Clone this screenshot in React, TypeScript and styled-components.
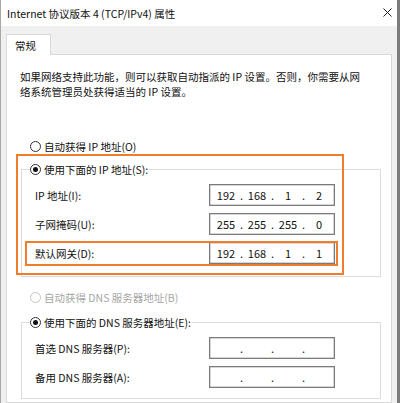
import React from "react";
import styled, { createGlobalStyle } from "styled-components";

const GlobalStyle = createGlobalStyle`
  html, body {
    margin: 0;
    padding: 0;
    background: #ffffff;
  }
  body {
    font-family: "Noto Sans CJK SC", "Noto Sans", sans-serif;
    font-size: 10.5px;
    color: #111;
  }
`;

const ORANGE = "#ef7d2c";

const Window = styled.div`
  width: 400px;
  height: 403px;
  box-sizing: border-box;
  border-left: 1px solid #a8a8a8;
  border-right: 3px solid #7c7c7c;
  background: #f0f0f0;
  overflow: hidden;
  display: flex;
  flex-direction: column;
`;

const TitleBar = styled.div`
  height: 26px;
  flex: none;
  background: #ffffff;
  display: flex;
  align-items: center;
  justify-content: space-between;
  padding: 0 5px 0 6px;
`;

const Title = styled.span`
  font-size: 10.5px;
  color: #111;
`;

const CloseIcon = styled.svg`
  width: 9px;
  height: 9px;
  margin-top: -1px;
`;

const Body = styled.div`
  flex: 1;
  padding: 8px 5px 0 5px;
  display: flex;
  flex-direction: column;
`;

const Tabs = styled.div`
  display: flex;
  flex: none;
`;

const Tab = styled.div`
  width: 45px;
  height: 21px;
  box-sizing: border-box;
  background: #ffffff;
  border: 1px solid #d9d9d9;
  border-bottom: none;
  padding: 3px 0 0 8px;
  margin-bottom: -1px;
  position: relative;
  z-index: 1;
`;

const Panel = styled.div`
  flex: 1;
  background: #ffffff;
  border: 1px solid #d9d9d9;
  padding: 14px 10px 0 13px;
  display: flex;
  flex-direction: column;

  & > * {
    flex: none;
  }
`;

const Intro = styled.p`
  margin: 0;
  line-height: 15px;
  white-space: nowrap;
`;

const RadioRow = styled.label<{ disabled?: boolean; inset?: number }>`
  display: flex;
  align-items: center;
  gap: 3px;
  height: 14px;
  padding-left: ${({ inset = 10 }) => inset}px;
  color: ${({ disabled }) => (disabled ? "#a6a6a6" : "#111")};
  white-space: nowrap;
`;

const Circle = styled.span<{ checked?: boolean; disabled?: boolean }>`
  width: 11px;
  height: 11px;
  box-sizing: border-box;
  border-radius: 50%;
  border: 1px solid ${({ disabled }) => (disabled ? "#c4c4c4" : "#333")};
  background: #fff;
  display: flex;
  align-items: center;
  justify-content: center;

  &::after {
    content: "";
    width: 5px;
    height: 5px;
    border-radius: 50%;
    background: #111;
    display: ${({ checked }) => (checked ? "block" : "none")};
  }
`;

const Section = styled.div<{ top: number }>`
  position: relative;
  margin-top: ${({ top }) => top}px;
`;

const Group = styled.fieldset<{ bottom: number }>`
  margin: 0 0 0 1px;
  width: 360px;
  box-sizing: border-box;
  border: 1px solid #dcdcdc;
  padding: 8px 0 ${({ bottom }) => bottom}px 13px;
  display: flex;
  flex-direction: column;
  gap: 7px;

  & > * {
    flex: none;
  }
`;

const Legend = styled.legend`
  padding: 0 1px 0 0;
  margin-left: -5px;
  height: 14px;
  display: flex;
  align-items: center;
`;

const FieldRow = styled.div`
  position: relative;
  width: 300px;
  height: 22px;
  display: flex;
  align-items: center;
  justify-content: space-between;
`;

const FieldLabel = styled.span`
  white-space: nowrap;
`;

const IpBox = styled.div`
  width: 126px;
  height: 22px;
  box-sizing: border-box;
  border: 1px solid #7a7a7a;
  box-shadow: inset 0 0 0 0.5px #b0b0b0;
  padding-left: 4px;
  display: flex;
  align-items: center;
  font-size: 11px;
`;

const Octet = styled.span`
  width: 24px;
  text-align: center;
`;

const Dot = styled.span`
  width: 7px;
  text-align: center;
`;

const Highlight = styled.div<{
  l: number;
  t: number;
  w: number;
  h: number;
}>`
  position: absolute;
  left: ${({ l }) => l}px;
  top: ${({ t }) => t}px;
  width: ${({ w }) => w}px;
  height: ${({ h }) => h}px;
  box-sizing: border-box;
  border: 2.5px solid ${ORANGE};
  pointer-events: none;
`;

const Gap = styled.div<{ h: number }>`
  height: ${({ h }) => h}px;
`;

const IpField: React.FC<{ value?: string[] }> = ({ value = ["", "", "", ""] }) => (
  <IpBox>
    {value.map((v, i) => (
      <React.Fragment key={i}>
        <Octet>{v}</Octet>
        {i < 3 && <Dot>.</Dot>}
      </React.Fragment>
    ))}
  </IpBox>
);

const Radio: React.FC<{
  checked?: boolean;
  disabled?: boolean;
  inset?: number;
  children: React.ReactNode;
}> = ({ checked, disabled, inset, children }) => (
  <RadioRow disabled={disabled} inset={inset}>
    <Circle checked={checked} disabled={disabled} />
    {children}
  </RadioRow>
);

const App: React.FC = () => {
  return (
    <>
      <GlobalStyle />
      <Window>
        <TitleBar>
          <Title>Internet 协议版本 4 (TCP/IPv4) 属性</Title>
          <CloseIcon viewBox="0 0 9 9">
            <path d="M0.5 0.5 L8.5 8.5 M8.5 0.5 L0.5 8.5" stroke="#222" strokeWidth="1" />
          </CloseIcon>
        </TitleBar>
        <Body>
          <Tabs>
            <Tab>常规</Tab>
          </Tabs>
          <Panel>
            <Intro>
              如果网络支持此功能，则可以获取自动指派的 IP 设置。否则，你需要从网
              <br />
              络系统管理员处获得适当的 IP 设置。
            </Intro>
            <Gap h={40} />
            <Radio>自动获得 IP 地址(O)</Radio>
            <Section top={9}>
              <Group bottom={12}>
                <Legend>
                  <Radio checked inset={0}>使用下面的 IP 地址(S):</Radio>
                </Legend>
                <FieldRow>
                  <FieldLabel>IP 地址(I):</FieldLabel>
                  <IpField value={["192", "168", "1", "2"]} />
                </FieldRow>
                <FieldRow>
                  <FieldLabel>子网掩码(U):</FieldLabel>
                  <IpField value={["255", "255", "255", "0"]} />
                </FieldRow>
                <FieldRow>
                  <FieldLabel>默认网关(D):</FieldLabel>
                  <IpField value={["192", "168", "1", "1"]} />
                  <Highlight l={-10} t={-1} w={313} h={25} />
                </FieldRow>
              </Group>
              <Highlight l={-4} t={-8} w={328} h={121} />
            </Section>
            <Gap h={13} />
            <Radio disabled>自动获得 DNS 服务器地址(B)</Radio>
            <Section top={11}>
              <Group bottom={10}>
                <Legend>
                  <Radio checked inset={0}>使用下面的 DNS 服务器地址(E):</Radio>
                </Legend>
                <FieldRow>
                  <FieldLabel>首选 DNS 服务器(P):</FieldLabel>
                  <IpField />
                </FieldRow>
                <FieldRow>
                  <FieldLabel>备用 DNS 服务器(A):</FieldLabel>
                  <IpField />
                </FieldRow>
              </Group>
            </Section>
          </Panel>
        </Body>
      </Window>
    </>
  );
};

export default App;
